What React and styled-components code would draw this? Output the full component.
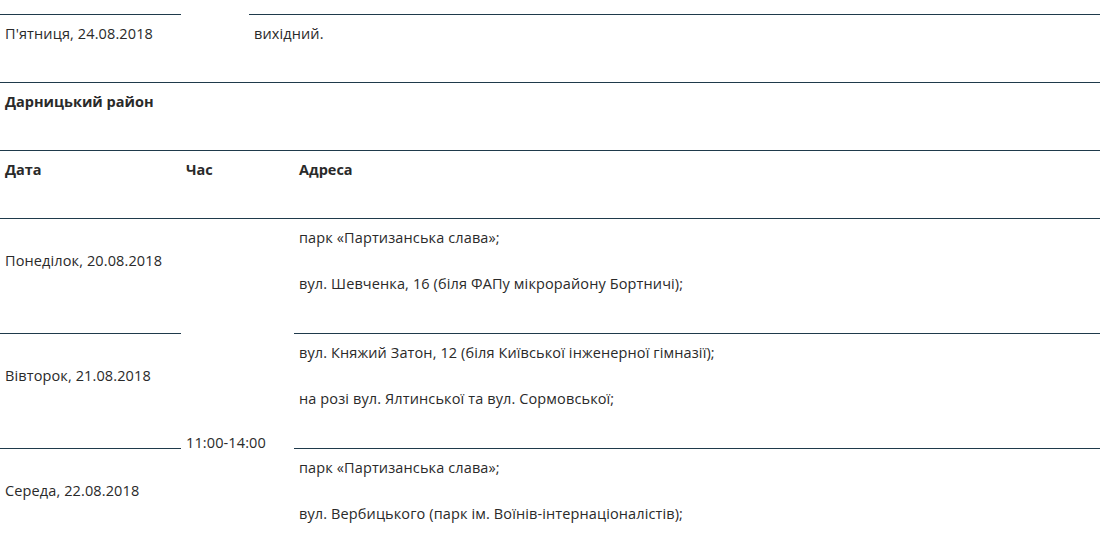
import React from "react";
import styled, { createGlobalStyle } from "styled-components";

const GlobalStyle = createGlobalStyle`
  body {
    margin: 0;
    background: #fff;
    font-family: "Open Sans", "Liberation Sans", sans-serif;
    color: #2a2a2a;
    overflow: hidden;
  }
`;

const Page = styled.div`
  width: 1100px;
  padding-top: 14px;
`;

const Table = styled.table`
  width: 100%;
  border-collapse: collapse;
  table-layout: fixed;
`;

const Cell = styled.td`
  border-top: ${({ $open }) => ($open ? "none" : "1px solid #1f3a4b")};
  padding: ${({ $shift }) => 9 + ($shift || 0)}px 5px ${({ $tall }) => ($tall ? 13 : 12)}px;
  vertical-align: middle;
  font-size: 14.5px;
  font-weight: ${({ $bold }) => ($bold ? 700 : 400)};
  letter-spacing: ${({ $bold }) => ($bold ? "0" : "0.12px")};
  p {
    margin: 0 0 26px;
    line-height: 20px;
  }
`;

const days = [
  {
    date: "Понеділок, 20.08.2018",
    places: ["парк «Партизанська слава»;", "вул. Шевченка, 16 (біля ФАПу мікрорайону Бортничі);"],
  },
  {
    date: "Вівторок, 21.08.2018",
    places: [
      "вул. Княжий Затон, 12 (біля Київської інженерної гімназії);",
      "на розі вул. Ялтинської та вул. Сормовської;",
    ],
  },
  {
    date: "Середа, 22.08.2018",
    places: ["парк «Партизанська слава»;", "вул. Вербицького (парк ім. Воїнів-інтернаціоналістів);"],
  },
  {
    date: "Четвер, 23.08.2018",
    places: ["вул. Здолбунівська, 7;", "вул. Ревуцького, 9;"],
  },
];

export default function App() {
  return (
    <Page>
      <GlobalStyle />
      <Table>
        <colgroup>
          <col style={{ width: 181 }} />
          <col style={{ width: 68 }} />
          <col />
        </colgroup>
        <tbody>
          <tr>
            <Cell>
              <p>П'ятниця, 24.08.2018</p>
            </Cell>
            <Cell $open />
            <Cell>
              <p>вихідний.</p>
            </Cell>
          </tr>
        </tbody>
      </Table>
      <Table>
        <colgroup>
          <col style={{ width: 181 }} />
          <col style={{ width: 113 }} />
          <col />
        </colgroup>
        <tbody>
          <tr>
            <Cell colSpan={3} $bold>
              <p>Дарницький район</p>
            </Cell>
          </tr>
          <tr>
            <Cell $bold>
              <p>Дата</p>
            </Cell>
            <Cell $bold>
              <p>Час</p>
            </Cell>
            <Cell $bold>
              <p>Адреса</p>
            </Cell>
          </tr>
          {days.map((d, i) => (
            <tr key={d.date}>
              <Cell $tall>
                <p>{d.date}</p>
              </Cell>
              {i === 0 && (
                <Cell rowSpan={days.length} $shift={18} $tall>
                  <p>11:00-14:00</p>
                </Cell>
              )}
              <Cell $tall>
                {d.places.map((p) => (
                  <p key={p}>{p}</p>
                ))}
              </Cell>
            </tr>
          ))}
        </tbody>
      </Table>
    </Page>
  );
}
